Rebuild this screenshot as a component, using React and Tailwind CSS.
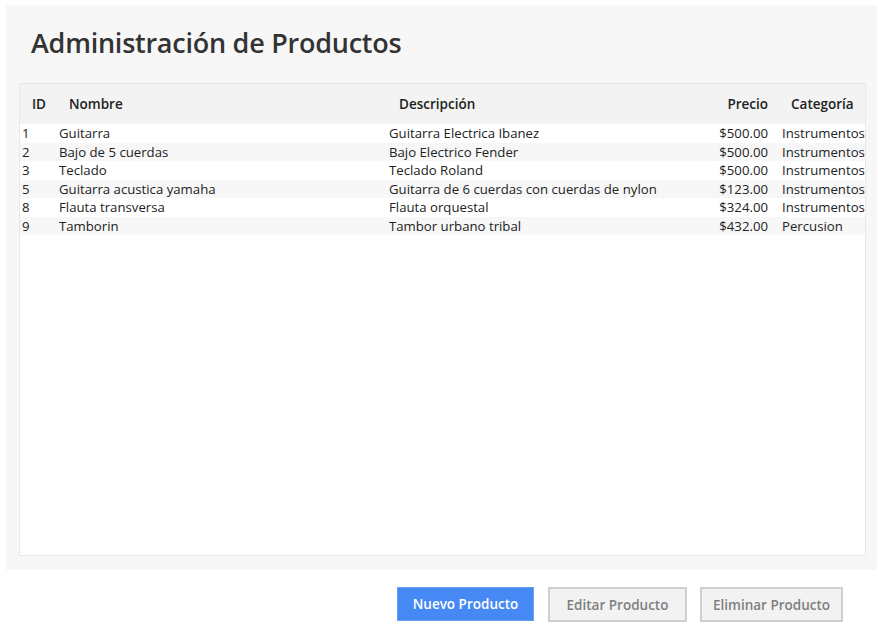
import React from 'react';

const productos = [
    { id: 1, nombre: 'Guitarra', descripcion: 'Guitarra Electrica Ibanez', precio: 500, categoria: 'Instrumentos' },
    { id: 2, nombre: 'Bajo de 5 cuerdas', descripcion: 'Bajo Electrico Fender', precio: 500, categoria: 'Instrumentos' },
    { id: 3, nombre: 'Teclado', descripcion: 'Teclado Roland', precio: 500, categoria: 'Instrumentos' },
    { id: 5, nombre: 'Guitarra acustica yamaha', descripcion: 'Guitarra de 6 cuerdas con cuerdas de nylon', precio: 123, categoria: 'Instrumentos' },
    { id: 8, nombre: 'Flauta transversa', descripcion: 'Flauta orquestal', precio: 324, categoria: 'Instrumentos' },
    { id: 9, nombre: 'Tamborin', descripcion: 'Tambor urbano tribal', precio: 432, categoria: 'Percusion' },
];

const cols = 'grid grid-cols-[36px_330px_300px_93px_86px]';

const App = () => {
    return (
        <div className="min-h-screen bg-white pt-[5px] pl-[6px] pr-[1px] text-[#222]" style={{ fontFamily: '"Open Sans", "Noto Sans", sans-serif' }}>
            <div className="h-[565px] bg-[#f7f7f7] px-[13px] pr-[11px] pb-[14px] flex flex-col">
                <h1 className="h-[78px] flex items-center pl-[12px] pb-[1px] text-[27px] font-semibold text-[#333] tracking-[-0.25px]">
                    Administración de Productos
                </h1>
                <div className="flex-1 bg-white border border-[#e8e8e8]">
                    <div className={`${cols} h-[40px] pt-[1px] bg-[#f3f3f3] items-center text-[13.5px] font-semibold text-[#222]`}>
                        <div className="pl-[12px]">ID</div>
                        <div className="pl-[13px]">Nombre</div>
                        <div className="pl-[13px]">Descripción</div>
                        <div className="text-right pr-[11px]">Precio</div>
                        <div className="pl-[12px]">Categoría</div>
                    </div>
                    {productos.map((p, i) => (
                        <div key={p.id} className={`${cols} h-[18.5px] items-center text-[13.2px] leading-[18.5px] ${i % 2 === 1 ? 'bg-[#f7f7f7]' : 'bg-white'}`}>
                            <div className="pl-[2px]">{p.id}</div>
                            <div className="pl-[3px]">{p.nombre}</div>
                            <div className="pl-[3px]">{p.descripcion}</div>
                            <div className="text-right pr-[11px]">${p.precio.toFixed(2)}</div>
                            <div className="pl-[3px] whitespace-nowrap">{p.categoria}</div>
                        </div>
                    ))}
                </div>
            </div>
            <div className="flex justify-end pt-[17px] pr-[34px]">
                <button className="w-[137px] h-[34px] pt-[1px] bg-[#4688f4] border border-[#6b9ff2] text-white text-[13.5px] font-semibold">
                    Nuevo Producto
                </button>
                <button className="ml-[14px] w-[139px] h-[35px] pt-[1px] bg-[#f2f2f2] border-2 border-[#cfcfcf] text-[#7f7f7f] text-[13.5px] font-semibold">
                    Editar Producto
                </button>
                <button className="ml-[13px] w-[143px] h-[35px] pt-[1px] bg-[#f2f2f2] border-2 border-[#cfcfcf] text-[#7f7f7f] text-[13.5px] font-semibold">
                    Eliminar Producto
                </button>
            </div>
        </div>
    );
};

export default App;
